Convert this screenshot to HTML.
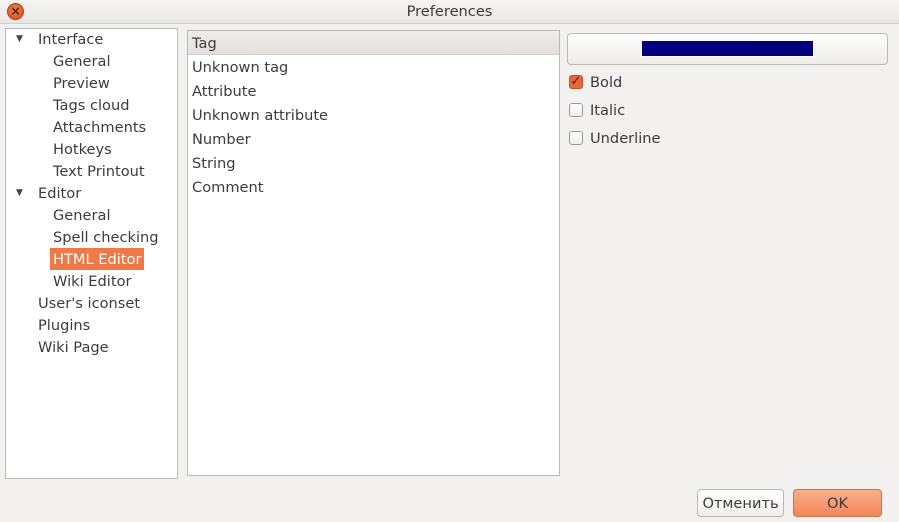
<!DOCTYPE html>
<html><head><style>
*{margin:0;padding:0;box-sizing:border-box}
body{width:899px;height:522px;background:#f2f1f0;font-family:"DejaVu Sans","Liberation Sans",sans-serif;font-size:14.6px;color:#3c3c3c;position:relative;overflow:hidden}
.title{position:absolute;left:0;top:0;width:899px;height:24px;background:linear-gradient(#f6f5f4,#e9e7e4);border-bottom:1px solid #d3d0cb;text-align:center;line-height:24px;font-size:14.6px;color:#3c3c3c}
.close{position:absolute;left:7px;top:3px;width:17px;height:17px;border-radius:50%;background:radial-gradient(circle at 50% 35%,#f37a45,#d94d1a);border:1px solid #a9441c;color:#3a2a22;font-size:12px;line-height:15px;text-align:center;font-weight:bold}
.panel{position:absolute;background:#fff;border:1px solid #bcb8b3}
.it{position:absolute;height:22px;line-height:24px;white-space:nowrap}
.tri{position:absolute;font-size:9px;color:#444}
.sel{background:#f07746;color:#fff;padding:0 3px;left:50px!important}
.cb{position:absolute;left:569px;width:14px;height:14px;border:1px solid #9e9a96;border-radius:3px;background:linear-gradient(#fff,#eeecea)}
.btn{position:absolute;top:489px;height:28px;border-radius:4px;text-align:center;line-height:27px;font-size:14.6px}
</style></head><body>
<div class="title"><div class="close">×</div>Preferences</div>

<div class="panel" style="left:5px;top:28px;width:173px;height:451px">
</div>
<div class="tri" style="left:16px;top:34px">▼</div>
<div class="it" style="left:38px;top:28px">Interface</div>
<div class="it" style="left:53px;top:50px">General</div>
<div class="it" style="left:53px;top:72px">Preview</div>
<div class="it" style="left:53px;top:94px">Tags cloud</div>
<div class="it" style="left:53px;top:116px">Attachments</div>
<div class="it" style="left:53px;top:138px">Hotkeys</div>
<div class="it" style="left:53px;top:160px">Text Printout</div>
<div class="tri" style="left:16px;top:188px">▼</div>
<div class="it" style="left:38px;top:182px">Editor</div>
<div class="it" style="left:53px;top:204px">General</div>
<div class="it" style="left:53px;top:226px">Spell checking</div>
<div class="it sel" style="top:248px;height:22px;line-height:23px">HTML Editor</div>
<div class="it" style="left:53px;top:270px">Wiki Editor</div>
<div class="it" style="left:38px;top:292px">User's iconset</div>
<div class="it" style="left:38px;top:314px">Plugins</div>
<div class="it" style="left:38px;top:336px">Wiki Page</div>

<div class="panel" style="left:187px;top:30px;width:373px;height:446px"></div>
<div style="position:absolute;left:188px;top:31px;width:371px;height:24px;background:linear-gradient(#efedeb,#e3e0dc);border-bottom:1px solid #d0ccc7"></div>
<div class="it" style="left:192px;top:32px">Tag</div>
<div class="it" style="left:192px;top:56px">Unknown tag</div>
<div class="it" style="left:192px;top:80px">Attribute</div>
<div class="it" style="left:192px;top:104px">Unknown attribute</div>
<div class="it" style="left:192px;top:128px">Number</div>
<div class="it" style="left:192px;top:152px">String</div>
<div class="it" style="left:192px;top:176px">Comment</div>

<div style="position:absolute;left:567px;top:33px;width:321px;height:32px;border:1px solid #bdb8b2;border-radius:4px;background:linear-gradient(#fefefe,#eeece9)"></div>
<div style="position:absolute;left:641px;top:40px;width:173px;height:17px;background:#00007f;border:1px solid #fff"></div>

<div class="cb" style="top:75px;background:#e8663a;border-color:#b9532d;color:#3a2a22;font-size:13px;line-height:12px;text-align:center">✓</div>
<div class="it" style="left:590px;top:71px">Bold</div>
<div class="cb" style="top:103px"></div>
<div class="it" style="left:590px;top:99px">Italic</div>
<div class="cb" style="top:131px"></div>
<div class="it" style="left:590px;top:127px">Underline</div>

<div class="btn" style="left:697px;width:87px;border:1px solid #bcb7b1;background:linear-gradient(#fff,#f0eeeb)">Отменить</div>
<div class="btn" style="left:793px;width:89px;border:1px solid #c9764e;background:linear-gradient(#fab08a,#f1865a);color:#3c3c3c">OK</div>
</body></html>
